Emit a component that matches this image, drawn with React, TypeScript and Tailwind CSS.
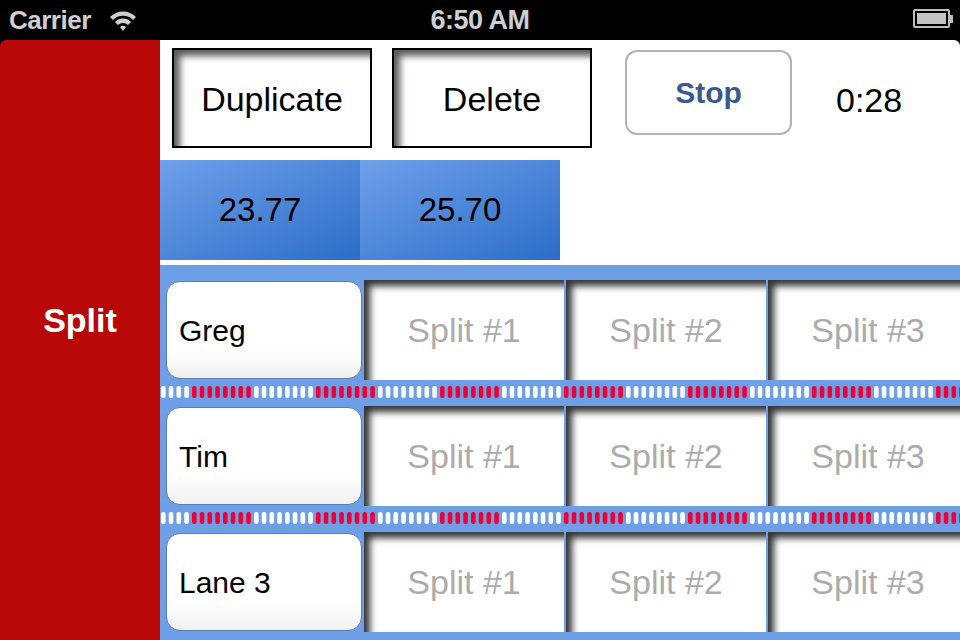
import React from "react";

const font = { fontFamily: '"Liberation Sans", Arial, sans-serif' };

function Strip() {
  const pills: React.ReactNode[] = [];
  for (let k = -4; k < 104; k++) {
    const x = 32 + k * 7.75;
    if (x > 800) break;
    const m = ((k % 16) + 16) % 16;
    pills.push(
      <rect key={k} x={x} y={0} width={4.6} height={12} rx={2.2} fill={m < 8 ? "#ec0036" : "#ffffff"} />
    );
  }
  return (
    <div className="h-[26px] pt-[6px]">
      <svg width="800" height="12" className="block">
        {pills}
      </svg>
    </div>
  );
}

function Row({ name }: { name: string }) {
  return (
    <div className="flex h-[100px] gap-[2px]">
      <div className="ml-[6px] mt-[1px] w-[196px] h-[98px] shrink-0 rounded-[14px] border border-[#5b7fb4] bg-gradient-to-b from-white via-white via-70% to-[#f1f1f1] flex items-center pl-[12px] text-[30px] text-black">
        {name}
      </div>
      {["Split #1", "Split #2", "Split #3"].map((s) => (
        <div
          key={s}
          className="w-[200px] h-[100px] shrink-0 bg-white shadow-[inset_7px_7px_7px_-1px_rgba(0,0,0,0.8)] flex items-center justify-center text-[34px] text-[#ababab]"
        >
          {s}
        </div>
      ))}
    </div>
  );
}

export default function App() {
  return (
    <div className="w-[960px] h-[640px] bg-black flex flex-col overflow-hidden" style={font}>
      <div className="h-[40px] shrink-0 relative flex items-center text-[#cfcfcf] font-bold">
        <span className="ml-[9px] text-[26px] tracking-[-0.5px]">Carrier</span>
        <svg width="30" height="24" viewBox="0 0 30 24" className="ml-[17px] mt-[1px]">
          <path d="M2 8 A18 18 0 0 1 28 8 L25 11 A14 14 0 0 0 5 11 Z" fill="#cfcfcf" />
          <path d="M7 13 A11 11 0 0 1 23 13 L20 16 A7 7 0 0 0 10 16 Z" fill="#cfcfcf" />
          <path d="M12 18 A4 4 0 0 1 18 18 L15 22 Z" fill="#cfcfcf" />
        </svg>
        <span className="absolute left-0 right-0 text-center text-[27px] tracking-[-0.5px]">6:50 AM</span>
        <div className="absolute left-[913px] top-[9px] flex items-center">
          <div className="w-[37px] h-[19px] border-[2px] border-[#bdbdbd] rounded-[2px] p-[2px]">
            <div className="w-full h-full bg-[#c4c4c4]" />
          </div>
          <div className="w-[3px] h-[8px] bg-[#bdbdbd]" />
        </div>
      </div>
      <div className="flex-1 flex rounded-t-[6px] overflow-hidden">
        <div className="w-[160px] shrink-0 bg-[#b70707] flex items-center justify-center pb-[40px] text-white font-bold text-[34px]">
          Split
        </div>
        <div className="flex-1 bg-white flex flex-col">
          <div className="h-[120px] shrink-0 flex items-start pt-[8px] pl-[12px]">
            <div className="w-[200px] h-[100px] pt-[3px] border-2 border-black shadow-[inset_7px_7px_7px_-1px_rgba(0,0,0,0.65)] flex items-center justify-center text-[34px] text-black">
              Duplicate
            </div>
            <div className="ml-[20px] w-[200px] h-[100px] pt-[3px] border-2 border-black shadow-[inset_7px_7px_7px_-1px_rgba(0,0,0,0.65)] flex items-center justify-center text-[34px] text-black">
              Delete
            </div>
            <div className="ml-[33px] mt-[2px] w-[167px] h-[85px] rounded-[12px] border-2 border-[#b3b3b3] bg-white flex items-center justify-center text-[30px] font-bold text-[#3a5a8e]">
              Stop
            </div>
            <div className="ml-[44px] h-[104px] flex items-center text-[34px] text-black">0:28</div>
          </div>
          <div className="h-[100px] shrink-0 flex">
            <div className="w-[200px] bg-gradient-to-br from-[#6fa0ea] to-[#2a6dc7] flex items-center justify-center text-[33px] text-black">
              23.77
            </div>
            <div className="w-[200px] bg-gradient-to-br from-[#6fa0ea] to-[#2a6dc7] flex items-center justify-center text-[33px] text-black">
              25.70
            </div>
          </div>
          <div className="h-[5px] shrink-0" />
          <div className="flex-1 bg-[#6c9fe6] pt-[15px] overflow-hidden">
            <Row name="Greg" />
            <Strip />
            <Row name="Tim" />
            <Strip />
            <Row name="Lane 3" />
          </div>
        </div>
      </div>
    </div>
  );
}
